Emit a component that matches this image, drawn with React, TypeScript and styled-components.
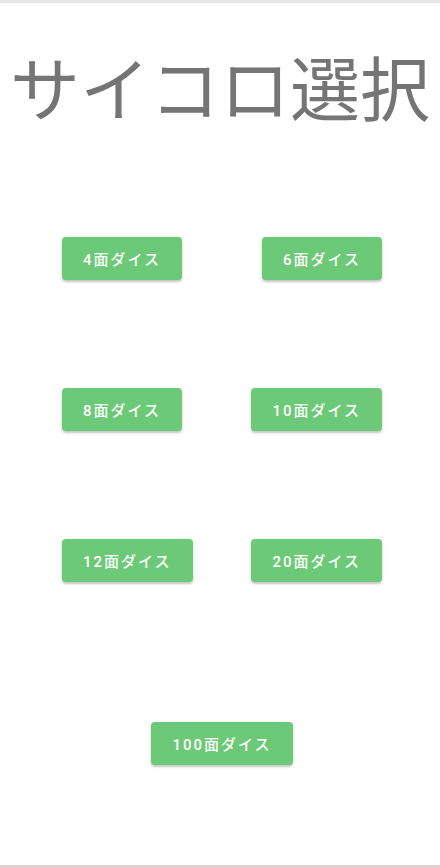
import React from "react";
import styled, { createGlobalStyle } from "styled-components";

const Global = createGlobalStyle`
  html, body { margin: 0; padding: 0; background: #fff; }
  body { font-family: Roboto, "Noto Sans CJK JP", sans-serif; }
`;

const Frame = styled.div`
  box-sizing: border-box;
  width: 440px;
  height: 867px;
  border-top: 3px solid #e6e6e6;
  border-bottom: 2px solid #d6d6d6;
  display: flex;
  flex-direction: column;
  overflow: hidden;
`;

const Title = styled.h1`
  margin: 38px 0 0;
  font-family: "Noto Sans CJK JP", sans-serif;
  font-weight: 400;
  font-size: 70px;
  line-height: 90px;
  color: #757575;
  text-align: center;
  white-space: nowrap;
`;

const Grid = styled.div`
  display: flex;
  flex-direction: column;
  padding: 0 58px 0 62px;
  margin-top: 106px;
  gap: 108px;
`;

const Row = styled.div<{ $center?: boolean }>`
  display: flex;
  justify-content: ${(p) => (p.$center ? "center" : "space-between")};
`;

const DiceButton = styled.button`
  height: 43px;
  padding: 0 21px;
  border: none;
  border-radius: 4px;
  background: #6cc977;
  color: #fff;
  font-family: Roboto, "Noto Sans CJK JP", sans-serif;
  font-weight: 500;
  font-size: 15px;
  letter-spacing: 2px;
  box-shadow: 0 2px 2px rgba(0, 0, 0, 0.18), 0 1px 4px rgba(0, 0, 0, 0.08);
  cursor: pointer;
`;

const LastRow = styled(Row)`
  margin-top: 32px;
`;

export default function App() {
  return (
    <>
      <Global />
      <Frame>
        <Title>サイコロ選択</Title>
        <Grid>
          <Row>
            <DiceButton>4面ダイス</DiceButton>
            <DiceButton>6面ダイス</DiceButton>
          </Row>
          <Row>
            <DiceButton>8面ダイス</DiceButton>
            <DiceButton>10面ダイス</DiceButton>
          </Row>
          <Row>
            <DiceButton>12面ダイス</DiceButton>
            <DiceButton>20面ダイス</DiceButton>
          </Row>
          <LastRow $center>
            <DiceButton>100面ダイス</DiceButton>
          </LastRow>
        </Grid>
      </Frame>
    </>
  );
}
